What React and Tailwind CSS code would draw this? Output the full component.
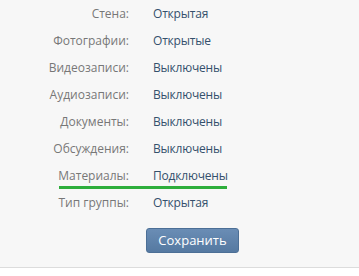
const rows = [
  ["Стена:", "Открытая"],
  ["Фотографии:", "Открытые"],
  ["Видеозаписи:", "Выключены"],
  ["Аудиозаписи:", "Выключены"],
  ["Документы:", "Выключены"],
  ["Обсуждения:", "Выключены"],
  ["Материалы:", "Подключены"],
  ["Тип группы:", "Открытая"],
]

export default function App() {
  return (
    <div className="w-[359px] h-[276px] bg-white font-['Open_Sans',sans-serif] text-[12px]">
      <div className="h-[268px] bg-[#f7f7f7] border-b border-[#dcdcdc]">
        <div className="flex flex-col">
          {rows.map(([label, value]) => (
            <div key={label} className="relative flex h-[27px] items-center">
              <span className="w-[129px] text-right text-[#777777]">{label}</span>
              <span className="ml-[24px] text-[#34506c] tracking-[-0.2px]">{value}</span>
              {label === "Материалы:" && (
                <div className="absolute left-[59px] top-[24px] h-[3px] w-[168px] bg-[#2eae3c]" />
              )}
            </div>
          ))}
        </div>
        <div className="mt-[12px] pl-[146px]">
          <button className="h-[25px] w-[93px] rounded-[3px] border border-[#4c6f96] bg-gradient-to-b from-[#6a8db5] to-[#5579a1] text-[13px] text-white">
            Сохранить
          </button>
        </div>
      </div>
    </div>
  )
}
